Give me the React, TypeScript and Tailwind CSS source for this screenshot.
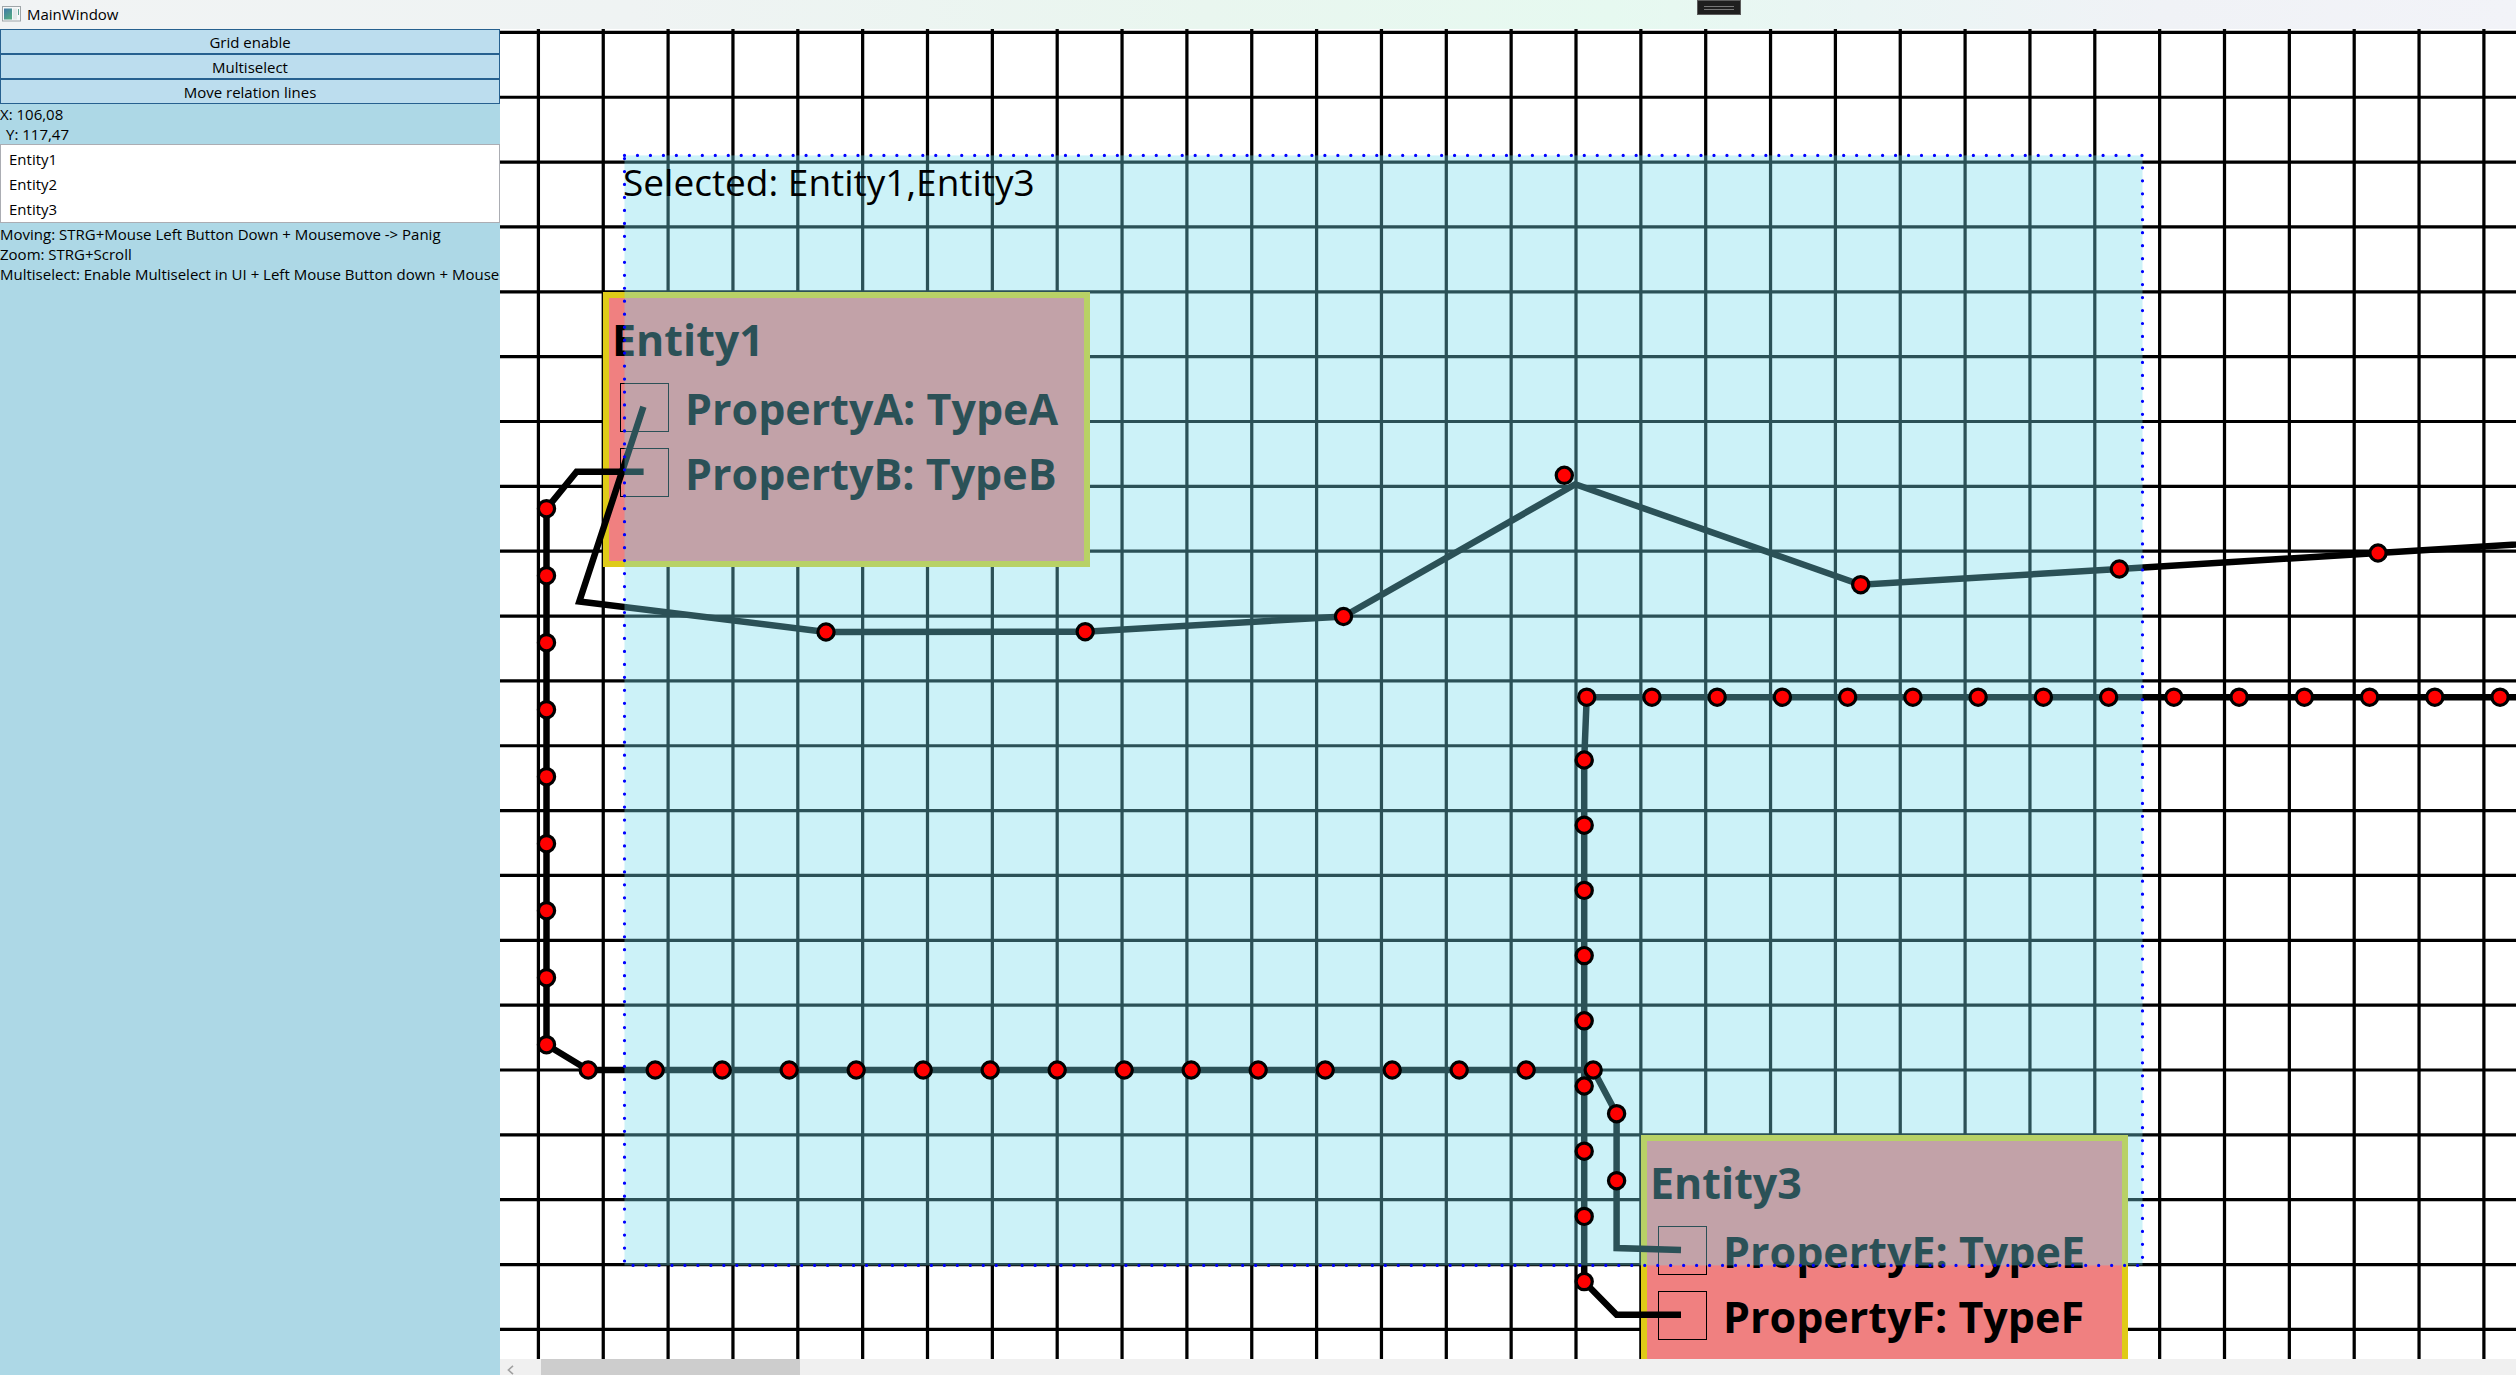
import React from "react";

type Point = [number, number];

const PITCH = 64.85;
const UNIT = 3.2425;

const range = (n: number) => Array.from({ length: n }, (_, i) => i);

const relationA: Point[] = [
  [143.4, 377.7], [79.3, 572.5], [326, 603], [585.2, 602.7], [843.5, 587.5],
  [1075.3, 455.3], [1360.7, 555.7], [1619.3, 540], [1878, 524], [2136, 508], [2652, 476],
];
const relationB: Point[] = [
  [143.6, 442.7], [76.6, 442.7], [46.5, 479.7], [46.5, 1015.7], [88.2, 1041],
  [1093.3, 1041], [1116.6, 1084.7], [1116.6, 1219], [1181, 1221],
];
const relationC: Point[] = [
  [1181, 1285.7], [1116.6, 1285.7], [1084.2, 1252.7], [1084.2, 731], [1086.7, 668.2], [4000, 668.2],
];

const handles: Point[] = [
  [326, 603], [585.2, 602.7], [843.5, 587.5], [1064.3, 446.3], [1360.7, 555.7], [1619.3, 540], [1878, 524],
  ...range(9).map((i): Point => [46.5, 479.7 + 67 * i]),
  ...range(16).map((i): Point => [88.2 + 67 * i, 1041]),
  [1116.6, 1084.7], [1116.6, 1151.7],
  ...range(9).map((i): Point => [1084.2, 731 + 65.2 * i]),
  ...range(24).map((i): Point => [1086.7 + 65.24 * i, 668.2]),
];

const toPoints = (pts: Point[]) => pts.map((p) => p.join(",")).join(" ");

function TitleBar() {
  return (
    <header className="relative flex h-[29px] shrink-0 items-center gap-[6px] bg-[linear-gradient(90deg,#f1f3f4_0%,#eff3f3_25%,#e9f6ef_48%,#e6f9f0_64%,#eaf5f4_74%,#f0f2f6_86%,#f2f3f8_100%)] pb-0.5 pl-[2px]">
      <svg width="19" height="16" viewBox="0 0 19 16" aria-hidden="true">
        <defs>
          <linearGradient id="appIcon" x1="0" y1="0" x2="0.6" y2="1">
            <stop offset="0" stopColor="#3f78a8" />
            <stop offset="1" stopColor="#53a985" />
          </linearGradient>
        </defs>
        <rect x="0.5" y="0.5" width="18" height="14.5" fill="#f6f8f9" stroke="#9fa5a8" />
        <rect x="2" y="2.5" width="8" height="11" fill="url(#appIcon)" />
        <rect x="11" y="2.5" width="4" height="11" fill="#e3e9ea" />
        <rect x="16" y="3" width="1" height="6" fill="#5fa394" />
      </svg>
      <h1 className="text-[15px] leading-5 text-black">MainWindow</h1>
      <button
        type="button"
        aria-label="Debug toolbar"
        className="absolute left-[67.45%] top-0 flex h-[15px] w-[44px] flex-col items-center justify-center gap-[2px] border border-[#5c5c5c] bg-[#1f1f1f]"
      >
        <span className="h-px w-[30px] bg-[#777]" />
        <span className="h-px w-[30px] bg-[#777]" />
      </button>
    </header>
  );
}

function Sidebar() {
  return (
    <aside className="w-[500px] shrink-0 overflow-hidden whitespace-nowrap bg-[#add8e6] text-[15px] leading-5 text-black">
      <div className="flex flex-col">
        {["Grid enable", "Multiselect", "Move relation lines"].map((label) => (
          <button key={label} type="button" className="h-[25px] border border-[#26608f] bg-[#bcddee] pt-px leading-5">
            {label}
          </button>
        ))}
      </div>
      <p>X: 106,08</p>
      <p className="pl-[6px]">Y: 117,47</p>
      <ul className="border border-[#abadb3] bg-white px-2 py-px">
        {["Entity1", "Entity2", "Entity3"].map((name) => (
          <li key={name} className="h-[25px] pt-[3px]">{name}</li>
        ))}
      </ul>
      <p className="pt-px">Moving: STRG+Mouse Left Button Down + Mousemove -&gt; Panig</p>
      <p>Zoom: STRG+Scroll</p>
      <p>Multiselect: Enable Multiselect in UI + Left Mouse Button down + Mousemove</p>
    </aside>
  );
}

function Entity({ name, properties, className }: { name: string; properties: string[]; className: string }) {
  return (
    <section
      className={`absolute h-[275px] w-[487px] border-[6px] border-[#dfcb18] bg-[#f08080] pl-[3px] pt-3 text-[43px] font-bold text-black ${className}`}
    >
      <h2 className="leading-[60px]">{name}</h2>
      <ul className="pl-2 pt-[7px]">
        {properties.map((p) => (
          <li key={p} className="h-[65px]">
            <label className="flex items-start gap-4">
              <input type="checkbox" className="mt-[6px] size-[49px] shrink-0 appearance-none border border-black" />
              <span className="whitespace-nowrap leading-[64px]">{p}</span>
            </label>
          </li>
        ))}
      </ul>
    </section>
  );
}

function Canvas() {
  return (
    <div className="relative min-h-0 flex-1 overflow-hidden bg-white">
      <svg className="absolute inset-0 size-full" aria-hidden="true">
        <g stroke="#000" strokeWidth={UNIT}>
          {range(60).map((i) => (
            <line key={`v${i}`} x1={38.4 + PITCH * i} x2={38.4 + PITCH * i} y1="0" y2="100%" />
          ))}
          {range(40).map((i) => (
            <line key={`h${i}`} y1={3.4 + PITCH * i} y2={3.4 + PITCH * i} x1="0" x2="100%" />
          ))}
        </g>
      </svg>
      <Entity name="Entity1" properties={["PropertyA: TypeA", "PropertyB: TypeB"]} className="left-[103px] top-[263px]" />
      <Entity name="Entity3" properties={["PropertyE: TypeE", "PropertyF: TypeF"]} className="left-[1141px] top-[1106px]" />
      <svg className="pointer-events-none absolute inset-0 size-full" aria-hidden="true">
        <g fill="none" stroke="#000" strokeWidth={UNIT * 2}>
          <polyline points={toPoints(relationA)} />
          <polyline points={toPoints(relationB)} />
          <polyline points={toPoints(relationC)} />
        </g>
        <rect x="124.5" y="126.4" width="1518" height="1110" fill="#74dbeb" fillOpacity="0.37" />
        <path
          d="M124.5 126.4H1642.5V1236.4H124.5V126.4"
          fill="none"
          stroke="#00f"
          strokeWidth={UNIT}
          strokeLinecap="round"
          strokeDasharray="0 12.97"
        />
        <g fill="#f00" stroke="#000" strokeWidth={UNIT}>
          {handles.map(([x, y], i) => (
            <circle key={i} cx={x} cy={y} r="8.1" />
          ))}
        </g>
      </svg>
      <p className="absolute left-[123px] top-[127px] whitespace-nowrap text-[37px] leading-[52px] text-black">
        Selected: Entity1,Entity3
      </p>
    </div>
  );
}

function ScrollBar() {
  return (
    <div className="flex h-4 shrink-0 items-start overflow-hidden bg-[#f0f0f0]">
      <button type="button" aria-label="Scroll left" className="flex h-[21px] w-[41px] shrink-0 items-center pl-[7px]">
        <svg width="7" height="10" viewBox="0 0 7 10" fill="none" stroke="#a0a0a0" strokeWidth="1.6">
          <path d="M6 0.8 L1.4 5 L6 9.2" />
        </svg>
      </button>
      <div className="h-[21px] w-[259px] bg-[#cdcdcd]" />
    </div>
  );
}

export default function App() {
  return (
    <div className="flex h-screen flex-col overflow-hidden font-['Open_Sans','Noto_Sans',sans-serif]">
      <TitleBar />
      <div className="flex min-h-0 flex-1">
        <Sidebar />
        <main className="flex min-w-0 flex-1 flex-col">
          <Canvas />
          <ScrollBar />
        </main>
      </div>
    </div>
  );
}
